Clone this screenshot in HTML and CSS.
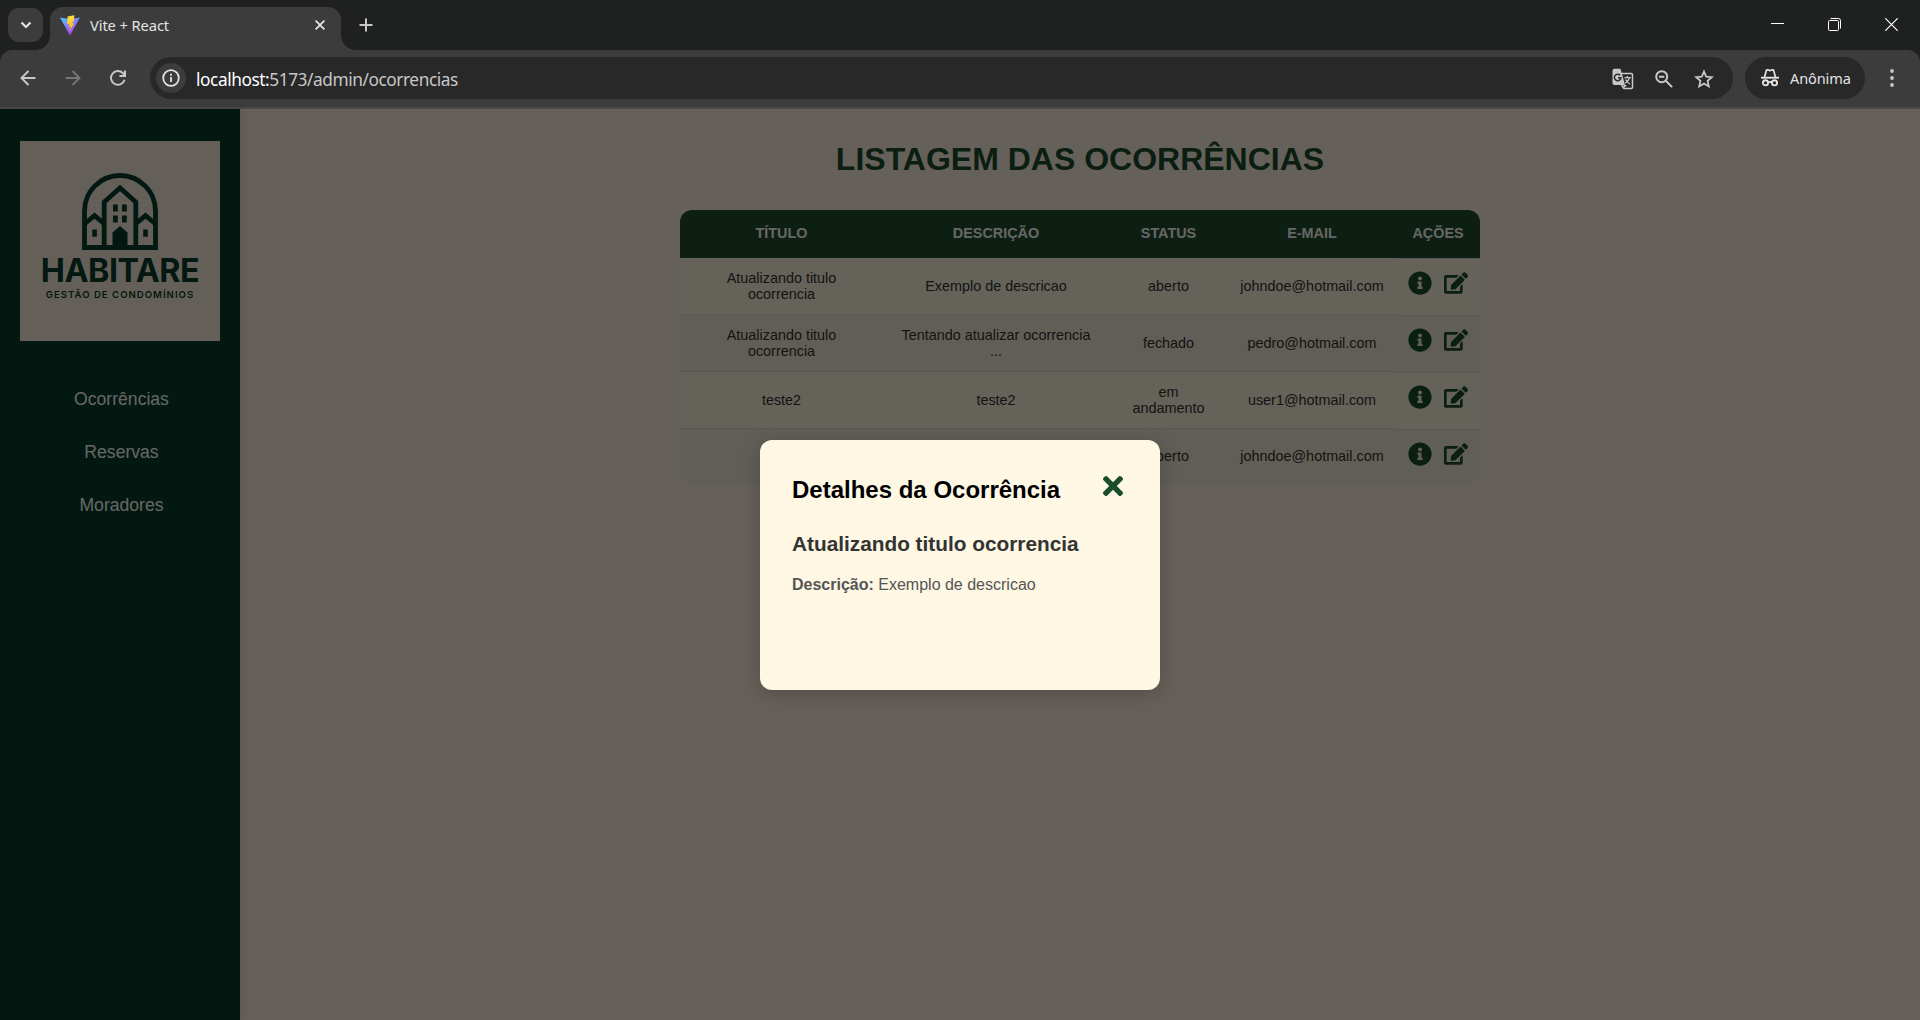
FILE: index.html
```html
<!DOCTYPE html>
<html lang="pt-BR">
<head>
<meta charset="utf-8">
<title>Vite + React</title>
<link rel="stylesheet" href="styles.css">
</head>
<body>
<svg class="sprite" aria-hidden="true">
  <defs>
    <symbol id="info" viewBox="0 0 512 512"><path d="M256 8C119.043 8 8 119.083 8 256c0 136.997 111.043 248 248 248s248-111.003 248-248C504 119.083 392.957 8 256 8zm0 110c23.196 0 42 18.804 42 42s-18.804 42-42 42-42-18.804-42-42 18.804-42 42-42zm56 254c0 6.627-5.373 12-12 12h-88c-6.627 0-12-5.373-12-12v-24c0-6.627 5.373-12 12-12h12v-64h-12c-6.627 0-12-5.373-12-12v-24c0-6.627 5.373-12 12-12h64c6.627 0 12 5.373 12 12v100h12c6.627 0 12 5.373 12 12v24z"/></symbol>
    <symbol id="edit" viewBox="0 0 576 512"><path d="M402.6 83.2l90.2 90.2c3.8 3.8 3.8 10 0 13.8L274.4 405.6l-92.8 10.3c-12.4 1.4-22.9-9.1-21.5-21.5l10.3-92.8L388.8 83.2c3.8-3.8 10-3.8 13.8 0zm162-22.9l-48.8-48.8c-15.2-15.2-39.9-15.2-55.2 0l-35.4 35.4c-3.8 3.8-3.8 10 0 13.8l90.2 90.2c3.8 3.8 10 3.8 13.8 0l35.4-35.4c15.2-15.3 15.2-40 0-55.2zM384 346.2V448H64V128h229.8c3.2 0 6.2-1.3 8.5-3.5l40-40c7.6-7.6 2.2-20.5-8.5-20.5H48C21.5 64 0 85.5 0 112v352c0 26.5 21.5 48 48 48h352c26.5 0 48-21.5 48-48V306.2c0-10.7-12.9-16-20.5-8.5l-40 40c-2.2 2.3-3.5 5.3-3.5 8.5z"/></symbol>
  </defs>
</svg>

<header class="browser">
  <div class="tabstrip">
    <div class="tab-search"><svg width="12" height="8" viewBox="0 0 12 8"><path d="M1.5 1.5 6 6l4.5-4.5" fill="none" stroke="#e3e3e3" stroke-width="2.2"/></svg></div>
    <div class="tab">
      <svg class="favicon" width="20" height="20" viewBox="0 0 20 20">
        <defs>
          <linearGradient id="vite" x1="0" y1="0" x2=".6" y2="1"><stop offset="0" stop-color="#41d1ff"/><stop offset="1" stop-color="#bd34fe"/></linearGradient>
          <linearGradient id="bolt" x1="0" y1="0" x2="0" y2="1"><stop offset="0" stop-color="#ffe34a"/><stop offset="1" stop-color="#ffa800"/></linearGradient>
        </defs>
        <path d="M0 2.6 10 4.3 20 2.4 10.4 19.7q-.4.6-.8 0Z" fill="url(#vite)"/>
        <path d="M14.3.2 7.6 1.4 7 9.2l2.3-.4-.8 3.3 2-.5-1.3 5.5 5-8.9-2.2.4 2-3.4Z" fill="url(#bolt)"/>
      </svg>
      <span class="tab-title">Vite + React</span>
      <svg width="10" height="10" viewBox="0 0 10 10"><path d="m.6.6 8.8 8.8m0-8.8L.6 9.4" stroke="#e3e3e3" stroke-width="1.8"/></svg>
    </div>
    <svg class="new-tab" width="14" height="14" viewBox="0 0 14 14"><path d="M7 .5v13M.5 7h13" stroke="#c7c7c7" stroke-width="2"/></svg>
    <div class="window-buttons">
      <svg width="13" height="13" viewBox="0 0 13 13"><path d="M0 5.5h13" stroke="#fff"/></svg>
      <svg width="13" height="13" viewBox="0 0 13 13" fill="none" stroke="#fff"><rect x=".5" y="2.5" width="10" height="10" rx="1"/><path d="M2.5.5h8q2 0 2 2v8"/></svg>
      <svg width="13" height="13" viewBox="0 0 13 13"><path d="m.3.3 12.4 12.4m0-12.4L.3 12.7" stroke="#fff" stroke-width="1.2"/></svg>
    </div>
  </div>
  <div class="toolbar">
    <div class="nav-buttons">
      <svg width="16" height="16" viewBox="0 0 16 16" fill="none" stroke="#c7c7c7" stroke-width="2"><path d="M15.5 8H2M8.5 1 1.5 8l7 7"/></svg>
      <svg width="16" height="16" viewBox="0 0 16 16" fill="none" stroke="#757575" stroke-width="2"><path d="M.5 8H14M7.5 1l7 7-7 7"/></svg>
      <svg width="16" height="16" viewBox="0 0 16 16" fill="none" stroke="#c7c7c7" stroke-width="2"><path d="M14.6 9.8A6.9 6.9 0 1 1 12.8 3L15 5.4M15 .4v5.5H9.4"/></svg>
    </div>
    <div class="omnibox">
      <div class="site-info"><svg width="18" height="18" viewBox="0 0 18 18" fill="none" stroke="#e3e3e3" stroke-width="1.8"><circle cx="9" cy="9" r="7.8"/><path d="M9 8v5M9 4.8v2"/></svg></div>
      <span class="url"><b>localhost:</b>5173/admin/ocorrencias</span>
      <div class="page-actions">
        <svg width="22" height="22" viewBox="0 0 22 22" fill="none">
          <path d="M9 5.5h10.2q1.3 0 1.3 1.3v12.4q0 1.3-1.3 1.3h-7.4L9.5 17" stroke="#c7c7c7" stroke-width="1.5"/>
          <path d="M2.5.8h6L13 17H2.5q-2 0-2-2V2.8q0-2 2-2Z" fill="#c7c7c7"/>
          <path d="M11.5 20.5V17H15Z" fill="#c7c7c7"/>
          <path d="M8.2 7.3A3.3 3.3 0 1 0 9 9.7H6" stroke="#282828" stroke-width="1.5"/>
          <path d="M12.5 9.6h6.3M15.3 8v1.6M17.5 9.8q-1 3.5-4.3 5.5M13.5 11.5q1.2 2.7 4.5 4.5" stroke="#c7c7c7" stroke-width="1.3"/>
        </svg>
        <svg width="18" height="18" viewBox="0 0 18 18" fill="none" stroke="#c7c7c7" stroke-width="2"><circle cx="6.7" cy="6.7" r="5.5"/><path d="m10.8 10.8 6.3 6.3M4 6.7h5.4"/></svg>
        <svg width="20" height="20" viewBox="0 0 20 20" fill="none" stroke="#c7c7c7" stroke-width="1.8"><path d="m10 2.6 2.2 5.1 5.6.5-4.2 3.7 1.2 5.5-4.8-2.9-4.8 2.9 1.2-5.5-4.2-3.7 5.600-.5Z"/></svg>
      </div>
    </div>
    <div class="profile">
      <svg width="18" height="18" viewBox="0 0 18 18" fill="none" stroke="#e3e3e3" stroke-width="1.9"><path d="M0 8.7h18"/><path d="m3.6 8 1.7-6.5q.2-.9 1.2-.7l2.5.7 2.5-.7q1-.2 1.2.7L14.4 8" stroke-width="1.7"/><circle cx="4.5" cy="13.8" r="2.6"/><circle cx="13.5" cy="13.8" r="2.6"/><path d="M7 13.5q2-1.2 4 0"/></svg>
      <span>Anônima</span>
    </div>
    <svg class="menu" width="4" height="18" viewBox="0 0 4 18" fill="#c7c7c7"><circle cx="2" cy="2" r="1.9"/><circle cx="2" cy="9" r="1.9"/><circle cx="2" cy="16" r="1.9"/></svg>
  </div>
</header>

<div class="app">
  <aside class="sidebar">
    <div class="logo">
      <svg width="76" height="77" viewBox="0 0 76 77" fill="none" stroke="#083d28" stroke-width="4.8">
        <path d="M2.5 74.5V38a35.5 35.5 0 0 1 71 0v36.5Z"/>
        <path d="M22.2 74V29L38 15l15.8 14v45"/>
        <path d="m3 50.5 9.5-7.8 9.5 7.8M54 50.5l9.5-7.8 9.5 7.8"/>
        <g fill="#083d28" stroke="none"><path d="M31 31.5h4.8v7H31zM40 31.5h4.8v7H40zM31 42.5h4.8v7H31zM40 42.5h4.8v7H40zM10.3 56.5h4.6v7.2h-4.6zM61.2 56.5h4.6v7.2h-4.6zM30.500 76V59.5l7.5-6.6 7.5 6.6V76z"/></g>
      </svg>
      <div class="logo-name">HABITARE</div>
      <div class="logo-tag">GESTÃO DE CONDOMÍNIOS</div>
    </div>
    <nav class="side-nav"><a>Ocorrências</a><a>Reservas</a><a>Moradores</a></nav>
  </aside>
  <main class="content">
    <h1>LISTAGEM DAS OCORRÊNCIAS</h1>
    <table class="list">
      <colgroup><col class="c-title"><col class="c-desc"><col class="c-status"><col class="c-mail"><col class="c-actions"></colgroup>
      <thead><tr><th>TÍTULO</th><th>DESCRIÇÃO</th><th>STATUS</th><th>E-MAIL</th><th>AÇÕES</th></tr></thead>
      <tbody>
        <tr><td>Atualizando titulo<br>ocorrencia</td><td>Exemplo de descricao</td><td>aberto</td><td>johndoe@hotmail.com</td><td class="actions"><div><svg><use href="#info"/></svg><svg><use href="#edit"/></svg></div></td></tr>
        <tr><td>Atualizando titulo<br>ocorrencia</td><td>Tentando atualizar ocorrencia<br>...</td><td>fechado</td><td>pedro@hotmail.com</td><td class="actions"><div><svg><use href="#info"/></svg><svg><use href="#edit"/></svg></div></td></tr>
        <tr><td>teste2</td><td>teste2</td><td>em<br>andamento</td><td>user1@hotmail.com</td><td class="actions"><div><svg><use href="#info"/></svg><svg><use href="#edit"/></svg></div></td></tr>
        <tr><td></td><td></td><td>aberto</td><td>johndoe@hotmail.com</td><td class="actions"><div><svg><use href="#info"/></svg><svg><use href="#edit"/></svg></div></td></tr>
      </tbody>
    </table>
  </main>
  <div class="overlay">
    <section class="modal">
      <div class="modal-head">
        <h2>Detalhes da Ocorrência</h2>
        <svg class="close" viewBox="0 80 352 352"><path d="M242.72 256l100.07-100.07c12.28-12.28 12.28-32.19 0-44.48l-22.24-22.24c-12.28-12.28-32.19-12.28-44.48 0L176 189.28 75.93 89.21c-12.28-12.28-32.19-12.28-44.48 0L9.21 111.45c-12.28 12.28-12.28 32.19 0 44.48L109.28 256 9.21 356.07c-12.28 12.28-12.28 32.19 0 44.48l22.24 22.24c12.28 12.28 32.2 12.28 44.48 0L176 322.72l100.07 100.07c12.28 12.28 32.2 12.28 44.48 0l22.24-22.24c12.28-12.28 12.28-32.19 0-44.48L242.72 256z"/></svg>
      </div>
      <h3>Atualizando titulo ocorrencia</h3>
      <p><strong>Descrição:</strong> Exemplo de descricao</p>
    </section>
  </div>
</div>
</body>
</html>
```
FILE: styles.css
```css
* { box-sizing: border-box; }

body {
  margin: 0;
  height: 1020px;
  display: flex;
  flex-direction: column;
  overflow: hidden;
  font-family: "Liberation Sans", Arial, sans-serif;
}

svg { display: block; flex: none; }
.sprite { display: none; }

/* Browser window */
.browser {
  height: 109px;
  flex: none;
  background: #1f2120;
  font-family: "Noto Sans", "Open Sans", sans-serif;
}

.tabstrip {
  height: 50px;
  display: flex;
  align-items: center;
  padding-left: 8px;
}

.tab-search {
  width: 35px;
  height: 34px;
  display: grid;
  place-items: center;
  border-radius: 11px;
  background: #3c3c3c;
}

.tab {
  position: relative;
  width: 291px;
  height: 43px;
  margin-left: 7px;
  align-self: flex-end;
  display: flex;
  align-items: center;
  padding: 0 16px 7px 10px;
  border-radius: 13px 13px 0 0;
  background: #3c3c3c;
}

.tab::before,
.tab::after {
  content: "";
  position: absolute;
  bottom: 0;
  width: 14px;
  height: 14px;
}

.tab::before {
  right: 100%;
  background: radial-gradient(circle at 0 0, transparent 13.5px, #3c3c3c 14px);
}

.tab::after {
  left: 100%;
  background: radial-gradient(circle at 100% 0, transparent 13.5px, #3c3c3c 14px);
}

.tab-title {
  flex: 1;
  margin-left: 10px;
  font-size: 14.7px;
  line-height: 20px;
  letter-spacing: -0.1px;
  color: #e3e3e3;
}

.new-tab { margin-left: 18px; }

.window-buttons {
  flex: 1;
  display: flex;
  justify-content: flex-end;
  gap: 44px;
  padding: 0 22px 1px 0;
}

.toolbar {
  height: 59px;
  display: flex;
  align-items: center;
  padding-bottom: 2px;
  border-bottom: 2px solid #484848;
  border-radius: 12px 12px 0 0;
  background: #3c3c3c;
}

.nav-buttons {
  display: flex;
  gap: 29px;
  padding-left: 20px;
  width: 150px;
}

.omnibox {
  width: 1583px;
  height: 42px;
  display: flex;
  align-items: center;
  padding-left: 6px;
  border-radius: 21px;
  background: #282828;
}

.site-info {
  width: 30px;
  height: 30px;
  display: grid;
  place-items: center;
  border-radius: 50%;
  background: #3c3c3c;
}

.url {
  flex: 1;
  margin-left: 10px;
  padding-top: 3px;
  font-size: 17.3px;
  letter-spacing: -0.44px;
  color: #c7c7c7;
}

.url b { font-weight: 400; color: #fff; }

.page-actions {
  display: flex;
  align-items: center;
  gap: 21px;
  padding: 2px 19px 0 0;
}

.profile {
  width: 120px;
  height: 42px;
  margin-left: 12px;
  display: flex;
  align-items: center;
  gap: 11px;
  padding-left: 16px;
  border-radius: 21px;
  background: #282828;
  font-size: 14.5px;
  letter-spacing: -0.1px;
  color: #e3e3e3;
}

.menu { margin-left: 25px; }

/* Application */
.app {
  position: relative;
  flex: 1;
  display: flex;
  background: #fff0e1;
}

.sidebar {
  width: 240px;
  padding: 32px 20px;
  background: #063d28;
  box-shadow: 2px 0 8px rgba(0, 0, 0, 0.1);
}

.logo {
  width: 200px;
  height: 200px;
  display: flex;
  flex-direction: column;
  align-items: center;
  padding-top: 32px;
  background: #fbeede;
  color: #083d28;
  white-space: nowrap;
}

.logo-name {
  margin-top: 5px;
  font: 700 32.3px/32px "Inter", sans-serif;
  letter-spacing: -0.5px;
}

.logo-tag {
  margin-top: 2px;
  font: 600 9.6px/12px "Inter", sans-serif;
  letter-spacing: 1px;
}

.side-nav {
  display: flex;
  flex-direction: column;
  align-items: center;
  gap: 33px;
  padding: 48px 0 0 3px;
  font-size: 17.6px;
  line-height: 20px;
  font-weight: 500;
  color: #fff;
}

.content { flex: 1; }

h1, h2, h3, p { margin: 0; }

.content h1 {
  padding-top: 31px;
  text-align: center;
  font-size: 32px;
  line-height: 38px;
  color: #1b4d2b;
}

.list {
  width: 800px;
  margin: 32px auto 0;
  table-layout: fixed;
  border-spacing: 0;
  border-radius: 12px;
  overflow: hidden;
  background: #fdf6e3;
  font-size: 14.4px;
  line-height: 16px;
  text-align: center;
  color: #333;
}

.c-title { width: 203px; }
.c-desc { width: 226px; }
.c-status { width: 119px; }
.c-mail { width: 168px; }
.c-actions { width: 84px; }

.list th {
  height: 48px;
  padding: 0 0 2px;
  background: #1f4e2d;
  color: #fff;
}

.list td {
  height: 57px;
  padding: 0;
  border-bottom: 1px solid #ddd;
  background: #faf4de;
}

.list tbody tr:nth-child(even) td { background: #f1ebd8; }
.list tr:last-child td { height: 55px; padding-bottom: 1px; border-bottom: 0; }

.list td.actions {
  border-top: 1px solid #ddd;
  border-bottom: 0;
  vertical-align: top;
}

.actions div {
  display: flex;
  gap: 12px;
  padding: 12px 0 0 12px;
}

.actions svg { width: 24px; height: 24px; fill: #1b4d2b; }
.actions svg + svg { height: 22px; margin-top: 1px; }

.overlay {
  position: absolute;
  inset: 0;
  display: flex;
  justify-content: center;
  align-items: center;
  background: rgba(0, 0, 0, 0.6);
}

.modal {
  width: 400px;
  height: 250px;
  padding: 32px;
  border-radius: 12px;
  background: #fdf7e4;
  box-shadow: 0 4px 20px rgba(0, 0, 0, 0.2);
}

.modal-head {
  display: flex;
  justify-content: space-between;
  padding: 4px 5px 0 0;
}

.modal h2 { font-size: 24px; line-height: 28px; color: #000; }
.close { width: 20px; height: 20px; fill: #1b4d2b; }
.modal h3 { margin-top: 28px; font-size: 20.8px; line-height: 24px; color: #333; }
.modal p { margin-top: 20px; font-size: 16px; line-height: 18px; color: #555; }
```
